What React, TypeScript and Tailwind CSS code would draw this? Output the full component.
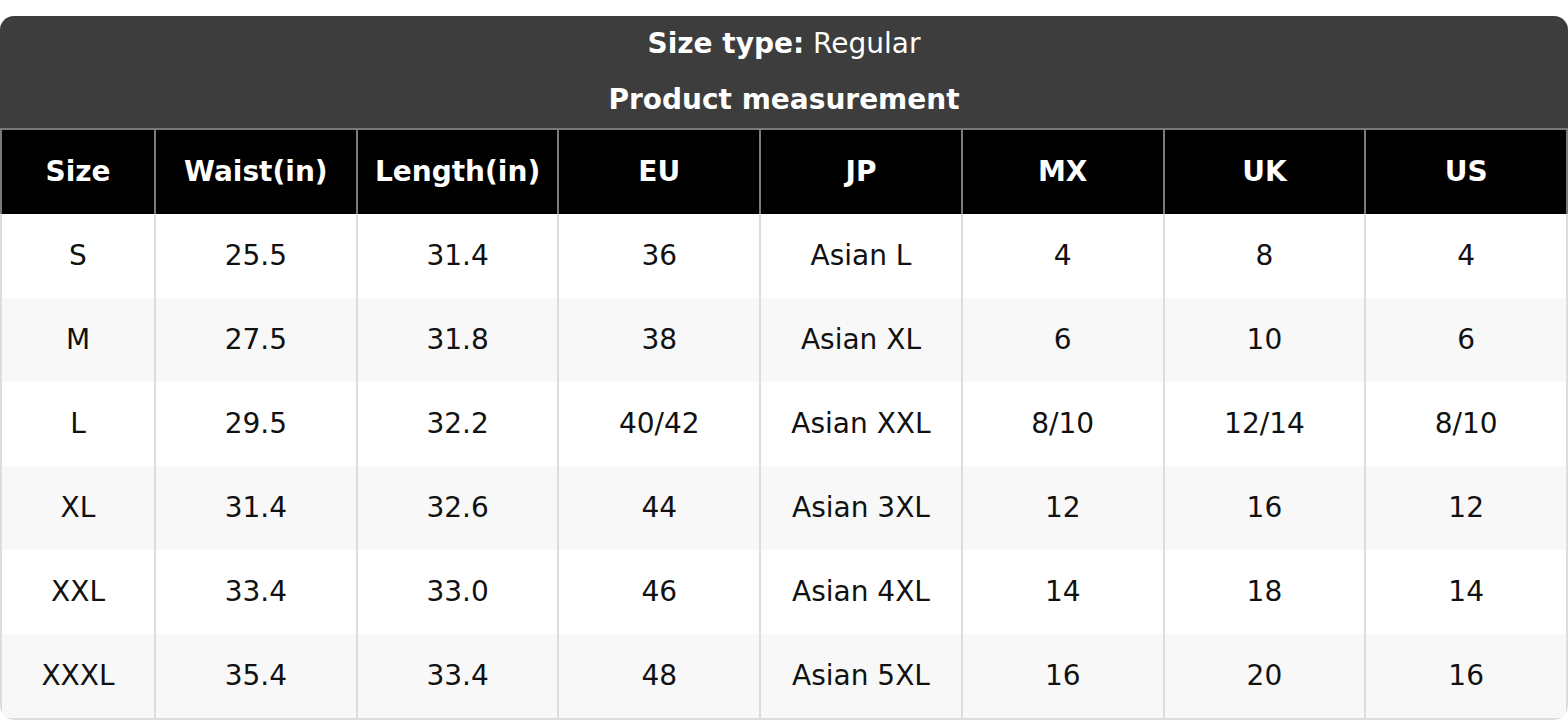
const headers = ["Size", "Waist(in)", "Length(in)", "EU", "JP", "MX", "UK", "US"];

const rows: string[][] = [
  ["S", "25.5", "31.4", "36", "Asian L", "4", "8", "4"],
  ["M", "27.5", "31.8", "38", "Asian XL", "6", "10", "6"],
  ["L", "29.5", "32.2", "40/42", "Asian XXL", "8/10", "12/14", "8/10"],
  ["XL", "31.4", "32.6", "44", "Asian 3XL", "12", "16", "12"],
  ["XXL", "33.4", "33.0", "46", "Asian 4XL", "14", "18", "14"],
  ["XXXL", "35.4", "33.4", "48", "Asian 5XL", "16", "20", "16"],
];

const cols = "grid grid-cols-[152px_repeat(7,1fr)] gap-x-[2px] px-[2px]";

export default function App() {
  return (
    <div className="bg-white pt-4 font-['DejaVu_Sans',sans-serif] text-[28px]">
      <div className="rounded-[14px] overflow-hidden">
        <div className="bg-[#3d3d3d] text-white">
          <div className="h-14 flex items-center justify-center">
            <span className="font-bold">Size type:</span>
            <span>&nbsp;Regular</span>
          </div>
          <div className="h-14 flex items-center justify-center font-bold">
            Product measurement
          </div>
        </div>

        <div className={`${cols} bg-[#7a7a7a] pt-[2px]`}>
          {headers.map((h) => (
            <div key={h} className="h-[84px] bg-black text-white font-bold flex items-center justify-center">
              {h}
            </div>
          ))}
        </div>

        {rows.map((row, i) => (
          <div
            key={row[0]}
            className={`${cols} bg-[#dddddd] ${i === rows.length - 1 ? "pb-[2px] rounded-b-[14px]" : ""}`}
          >
            {row.map((cell, j) => (
              <div
                key={j}
                className={`h-[84px] flex items-center justify-center text-[#111] ${i % 2 === 0 ? "bg-white" : "bg-[#f8f8f8]"}`}
              >
                {cell}
              </div>
            ))}
          </div>
        ))}
      </div>
    </div>
  );
}
